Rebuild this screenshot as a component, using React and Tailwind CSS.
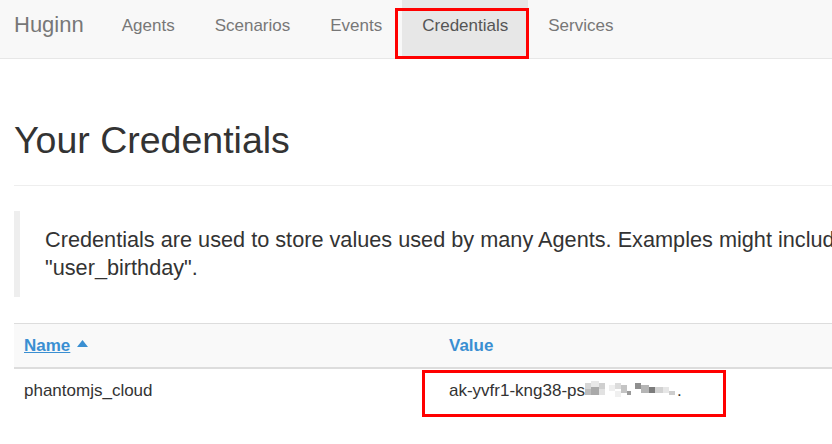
import React from 'react';

const navItems = ['Agents', 'Scenarios', 'Events', 'Credentials', 'Services'];

// pixelated blur over the secret part of the value
const blurBlocks = [
  [0, 2, 6, 6, '#d6d6d6'], [6, 0, 8, 6, '#e8e8e8'], [14, 2, 6, 6, '#cfcfcf'],
  [0, 8, 6, 6, '#bdbdbd'], [6, 6, 8, 8, '#a9a9a9'], [14, 8, 6, 6, '#e2e2e2'],
  [24, 4, 6, 6, '#efefef'], [30, 2, 6, 6, '#dcdcdc'], [36, 4, 6, 8, '#c4c4c4'],
  [30, 10, 6, 6, '#f0f0f0'], [42, 10, 4, 4, '#9a9a9a'], [50, 2, 6, 6, '#8f8f8f'],
  [56, 4, 8, 8, '#b5b5b5'], [64, 6, 6, 6, '#7b7b7b'], [70, 6, 8, 6, '#d2d2d2'],
  [78, 6, 6, 6, '#e6e6e6'], [84, 10, 6, 4, '#cdcdcd'],
];

function Blur() {
  return (
    <svg width="92" height="18" viewBox="0 0 92 18" className="inline-block align-[-3px]">
      {blurBlocks.map(([x, y, w, h, c], i) => (
        <rect key={i} x={x} y={y} width={w} height={h} fill={c} />
      ))}
    </svg>
  );
}

export default function App() {
  return (
    <div
      className="w-[832px] h-[444px] overflow-hidden bg-white text-[#333]"
      style={{ fontFamily: '"Liberation Sans", Arial, sans-serif' }}
    >
      {/* Navbar */}
      <div className="h-[59px] bg-[#f8f8f8] border-b border-[#e7e7e7] flex w-[1200px]">
        <div className="pl-[14px] pr-[18px] pt-[15px] text-[22px] leading-[20px] text-[#777]">Huginn</div>
        {navItems.map((item) => (
          <div
            key={item}
            className={`relative h-[58px] px-[20px] pt-[16px] text-[17px] leading-[20px] ${
              item === 'Credentials' ? 'bg-[#e7e7e7] text-[#555]' : 'text-[#777]'
            }`}
          >
            {item}
            {item === 'Credentials' && (
              <div className="absolute left-[-7px] top-[8px] w-[134px] h-[51px] border-[3px] border-[#ff0000]" />
            )}
          </div>
        ))}
      </div>

      <div className="pl-[14px] w-[1400px]">
        {/* Page header */}
        <h1 className="mt-[61px] pb-[24px] border-b border-[#eee] text-[37.5px] leading-[41px] font-normal">
          Your Credentials
        </h1>

        {/* Blockquote */}
        <div className="mt-[25px] border-l-[6px] border-[#eee] pl-[25px] py-[15px] text-[21.7px] leading-[28px]">
          <p className="whitespace-nowrap">
            Credentials are used to store values used by many Agents. Examples might include "twitter_consumer_secret",
          </p>
          <p>"user_birthday".</p>
        </div>

        {/* Table */}
        <table className="mt-[26px] w-[1200px] border-collapse text-[17px] leading-[27px]">
          <thead>
            <tr className="bg-[#f9f9f9] border-t border-[#ddd] border-b-2">
              <th className="w-[425px] text-left px-[10px] py-[8px] font-bold text-[#3a8fd2]">
                <span className="underline">Name</span>
                <svg width="11" height="7" viewBox="0 0 11 7" className="inline-block ml-[7px] align-[4px]">
                  <path d="M0 7 L5.5 0 L11 7 Z" fill="#3a8fd2" />
                </svg>
              </th>
              <th className="text-left px-[10px] py-[8px] font-bold text-[#3a8fd2]">Value</th>
            </tr>
          </thead>
          <tbody>
            <tr>
              <td className="px-[10px] py-[8px]">phantomjs_cloud</td>
              <td className="relative px-[10px] py-[8px]">
                ak-yvfr1-kng38-ps<Blur />.
                <div className="absolute left-[-17px] top-[1px] w-[304px] h-[47px] border-[3px] border-[#ff0000]" />
              </td>
            </tr>
          </tbody>
        </table>
      </div>
    </div>
  );
}
